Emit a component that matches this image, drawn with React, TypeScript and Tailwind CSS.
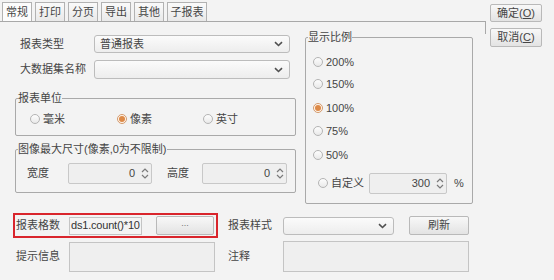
const font = { fontFamily: '"Liberation Sans", "Noto Sans CJK SC", sans-serif' };

const Chevron = () => (
    <svg width="9" height="6" viewBox="0 0 9 6" className="shrink-0">
        <path d="M1 1.2 L4.5 4.5 L8 1.2" fill="none" stroke="#505050" strokeWidth="1.6" />
    </svg>
);

const Spin = () => (
    <svg width="8" height="13" viewBox="0 0 8 13" className="shrink-0">
        <path d="M1 5 L4 2 L7 5" fill="none" stroke="#7a7a7a" strokeWidth="1.2" />
        <path d="M1 8 L4 11 L7 8" fill="none" stroke="#7a7a7a" strokeWidth="1.2" />
    </svg>
);

const Radio = ({ on = false }: { on?: boolean }) =>
    on ? (
        <span className="w-[10px] h-[10px] rounded-full border border-[#d39a6c] bg-[#fff6ee] flex items-center justify-center shrink-0">
            <span className="w-[6px] h-[6px] rounded-full bg-[#dd8a48]" />
        </span>
    ) : (
        <span className="w-[10px] h-[10px] rounded-full border border-[#b4b4b4] bg-gradient-to-b from-[#fdfdfd] to-[#e9e9e9] shrink-0" />
    );

const Select = ({ w, h, text }: { w: string; h: string; text?: string }) => (
    <div className={`${w} ${h} flex items-center justify-between pl-[5px] pr-[6px] border border-[#bcbcbc] rounded-[3px] bg-gradient-to-b from-[#fbfbfb] to-[#ededed]`}>
        <span>{text}</span>
        <Chevron />
    </div>
);

const Spinner = ({ w, value }: { w: string; value: string }) => (
    <div className={`${w} h-[21px] flex items-center justify-end gap-[6px] pr-[2px] border border-[#c8c8c8] rounded-[2px] bg-[#efefef]`}>
        <span>{value}</span>
        <Spin />
    </div>
);

const Btn = ({ w, h, children }: { w: string; h: string; children: React.ReactNode }) => (
    <div className={`${w} ${h} flex items-center justify-center border border-[#b9b9b9] rounded-[2px] bg-gradient-to-b from-[#f8f8f8] to-[#e3e3e3]`}>
        {children}
    </div>
);

const Legend = ({ children }: { children: React.ReactNode }) => (
    <span className="absolute -top-[9px] left-[2px] bg-[#f3f3f3] leading-[16px]">{children}</span>
);

const tabs = ['常规', '打印', '分页', '导出', '其他', '子报表'];

const App: React.FC = () => {
    return (
        <div className="w-[554px] h-[280px] bg-[#f3f3f3] text-[11px] text-[#454545] flex overflow-hidden" style={font}>
            {/* left: tabs + panel */}
            <div className="w-[486px] flex flex-col">
                <div className="flex items-end gap-[3px] pl-[2px] h-[22px] border-b border-[#a8a8a8]">
                    {tabs.map((t, i) => (
                        <div
                            key={t}
                            className={`h-[19px] flex items-center justify-center border border-b-0 border-[#b2b2b2] ${i === 5 ? 'w-[40px]' : 'w-[30px]'} ${i === 0 ? 'bg-[#fcfcfc]' : 'bg-gradient-to-b from-[#fafafa] to-[#e9e9e9]'}`}
                        >
                            {t}
                        </div>
                    ))}
                </div>
                <div className="relative flex-1">
                    <span className="absolute right-0 top-0 h-[12px] border-r border-[#a8a8a8]" />

                    {/* top section */}
                    <div className="flex">
                        <div className="w-[300px]">
                            <div className="flex items-center mt-[13px] h-[18px]">
                                <span className="pl-[20px] w-[94px]">报表类型</span>
                                <Select w="w-[196px]" h="h-[18px]" text="普通报表" />
                            </div>
                            <div className="flex items-center mt-[7px] h-[19px]">
                                <span className="pl-[20px] w-[94px]">大数据集名称</span>
                                <Select w="w-[196px]" h="h-[19px]" />
                            </div>

                            <div className="relative ml-[15px] mt-[19px] w-[281px] h-[38px] border border-[#a9a9a9] rounded-[2px]">
                                <Legend>报表单位</Legend>
                                <div className="flex items-center pl-[14px] pt-[13px] h-[27px]">
                                    <div className="w-[87px] flex items-center gap-[3px]"><Radio />毫米</div>
                                    <div className="w-[86px] flex items-center gap-[3px]"><Radio on />像素</div>
                                    <div className="flex items-center gap-[3px]"><Radio />英寸</div>
                                </div>
                            </div>

                            <div className="relative ml-[15px] mt-[13px] w-[281px] h-[44px] border border-[#a9a9a9] rounded-[2px]">
                                <Legend>图像最大尺寸(像素,0为不限制)</Legend>
                                <div className="flex items-center pt-[13px]">
                                    <span className="pl-[11px] w-[52px]">宽度</span>
                                    <Spinner w="w-[84px]" value="0" />
                                    <span className="pl-[15px] w-[50px]">高度</span>
                                    <Spinner w="w-[85px]" value="0" />
                                </div>
                            </div>
                        </div>

                        <div className="relative ml-[5px] mt-[15px] w-[168px] h-[167px] border border-[#a9a9a9] rounded-[2px]">
                            <Legend>显示比例</Legend>
                            <div className="flex flex-col pl-[7px]">
                                <div className="flex items-center gap-[3px] h-[14px] mt-[17px]"><Radio />200%</div>
                                <div className="flex items-center gap-[3px] h-[14px] mt-[8px]"><Radio />150%</div>
                                <div className="flex items-center gap-[3px] h-[14px] mt-[10px]"><Radio on />100%</div>
                                <div className="flex items-center gap-[3px] h-[14px] mt-[9px]"><Radio />75%</div>
                                <div className="flex items-center gap-[3px] h-[14px] mt-[10px]"><Radio />50%</div>
                                <div className="flex items-center h-[20px] mt-[11px] pl-[5px]">
                                    <Radio />
                                    <span className="ml-[3px] w-[38px]">自定义</span>
                                    <Spinner w="w-[78px]" value="300" />
                                    <span className="ml-[7px]">%</span>
                                </div>
                            </div>
                        </div>
                    </div>

                    {/* bottom rows */}
                    <div className="flex items-center mt-[9px] h-[25px]">
                        <div className="ml-[13px] w-[205px] h-[25px] border-2 border-[#d9252c] flex items-center">
                            <span className="pl-[1px] w-[54px]">报表格数</span>
                            <div className="w-[73px] h-[18px] flex items-center pl-[1px] border border-[#c4c4c4] bg-[#f4f4f4] overflow-hidden whitespace-nowrap tracking-[-0.2px] text-[#333]">
                                ds1.count()*10
                            </div>
                            <div className="ml-[14px]">
                                <Btn w="w-[58px]" h="h-[19px]"><span className="text-[#777] text-[9px] -mt-[3px]">...</span></Btn>
                            </div>
                        </div>
                        <span className="ml-[10px] w-[55px]">报表样式</span>
                        <Select w="w-[111px]" h="h-[18px]" />
                        <div className="ml-[15px]">
                            <Btn w="w-[60px]" h="h-[19px]">刷新</Btn>
                        </div>
                    </div>
                    <div className="flex items-center mt-[3px] h-[31px]">
                        <span className="pl-[16px] w-[69px]">提示信息</span>
                        <div className="w-[146px] h-[30px] border border-[#c4c4c4] bg-[#efefef]" />
                        <span className="ml-[13px] w-[55px]">注释</span>
                        <div className="w-[186px] h-[31px] border border-[#c4c4c4] bg-[#efefef]" />
                    </div>
                </div>
            </div>

            {/* right: dialog buttons */}
            <div className="flex flex-col ml-[4px] pt-[4px] gap-[6px]">
                <Btn w="w-[52px]" h="h-[18px]">确定(<span className="underline">O</span>)</Btn>
                <Btn w="w-[52px]" h="h-[19px]">取消(<span className="underline">C</span>)</Btn>
            </div>
        </div>
    );
};

export default App;
